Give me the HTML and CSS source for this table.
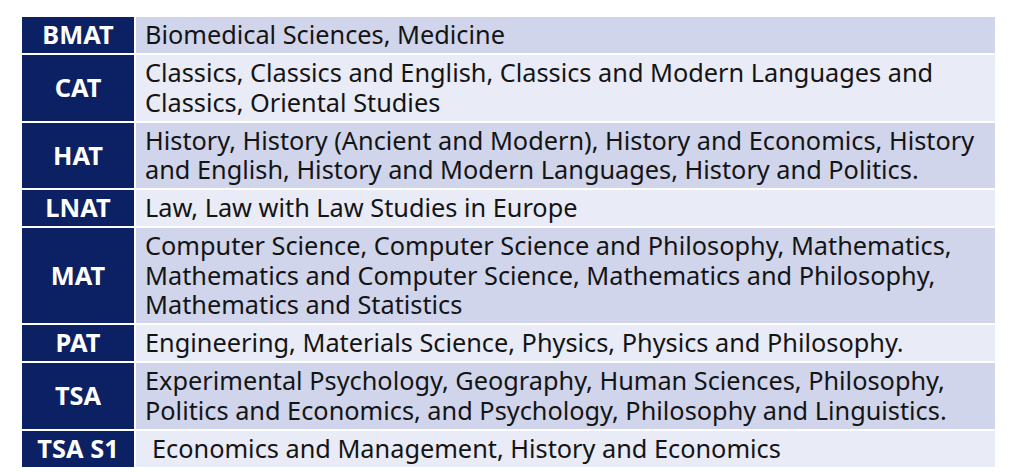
FILE: index.html
```html
<!DOCTYPE html>
<html>
<head>
<meta charset="utf-8">
<link rel="stylesheet" href="styles.css">
</head>
<body>
<div class="table">
  <div class="key">BMAT</div>
  <div class="val dark">Biomedical Sciences, Medicine</div>

  <div class="key">CAT</div>
  <div class="val light">Classics, Classics and English, Classics and Modern Languages and<br>Classics, Oriental Studies</div>

  <div class="key">HAT</div>
  <div class="val dark">History, History (Ancient and Modern), History and Economics, History<br>and English, History and Modern Languages, History and Politics.</div>

  <div class="key">LNAT</div>
  <div class="val light">Law, Law with Law Studies in Europe</div>

  <div class="key">MAT</div>
  <div class="val dark">Computer Science, Computer Science and Philosophy, Mathematics,<br>Mathematics and Computer Science, Mathematics and Philosophy,<br>Mathematics and Statistics</div>

  <div class="key">PAT</div>
  <div class="val light">Engineering, Materials Science, Physics, Physics and Philosophy.</div>

  <div class="key">TSA</div>
  <div class="val dark">Experimental Psychology, Geography, Human Sciences, Philosophy,<br>Politics and Economics, and Psychology, Philosophy and Linguistics.</div>

  <div class="key">TSA S1</div>
  <div class="val light indent">Economics and Management, History and Economics</div>
</div>
</body>
</html>
```

FILE: styles.css
```css
html, body {
  margin: 0;
  padding: 0;
  background: #ffffff;
}

body {
  padding: 17px 0 0 22px;
  font-family: "Noto Sans", "Open Sans", sans-serif;
}

.table {
  display: grid;
  grid-template-columns: 112px 859px;
  column-gap: 2px;
  row-gap: 2px;
  background: #ffffff;
  width: 973px;
}

.key {
  background: #0c2163;
  color: #ffffff;
  font-weight: 700;
  font-size: 25.4px;
  display: flex;
  align-items: center;
  justify-content: center;
  line-height: 29.5px;
}

.val {
  font-size: 25.3px;
  line-height: 29.5px;
  color: #141414;
  padding: 3px 0 3.5px 9px;
  white-space: nowrap;
}

.dark {
  background: #d0d5eb;
}

.light {
  background: #e9ebf6;
}

.indent {
  padding-left: 16px;
}
```
